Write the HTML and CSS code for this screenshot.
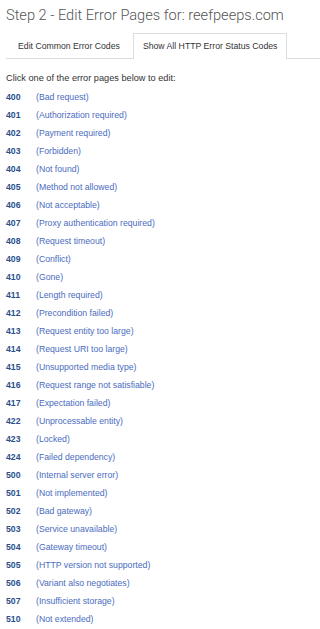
FILE: index.html
```html
<!DOCTYPE html>
<html>
<head>
<meta charset="utf-8">
<link rel="stylesheet" href="styles.css">
</head>
<body>
<h1 class="title">Step 2 - Edit Error Pages for: reefpeeps.com</h1>
<div class="tabs">
  <div class="tab">Edit Common Error Codes</div>
  <div class="tab active">Show All HTTP Error Status Codes</div>
</div>
<p class="intro">Click one of the error pages below to edit:</p>
<ul class="codes">
  <li><a class="code">400</a><a class="desc">(Bad request)</a></li>
  <li><a class="code">401</a><a class="desc">(Authorization required)</a></li>
  <li><a class="code">402</a><a class="desc">(Payment required)</a></li>
  <li><a class="code">403</a><a class="desc">(Forbidden)</a></li>
  <li><a class="code">404</a><a class="desc">(Not found)</a></li>
  <li><a class="code">405</a><a class="desc">(Method not allowed)</a></li>
  <li><a class="code">406</a><a class="desc">(Not acceptable)</a></li>
  <li><a class="code">407</a><a class="desc">(Proxy authentication required)</a></li>
  <li><a class="code">408</a><a class="desc">(Request timeout)</a></li>
  <li><a class="code">409</a><a class="desc">(Conflict)</a></li>
  <li><a class="code">410</a><a class="desc">(Gone)</a></li>
  <li><a class="code">411</a><a class="desc">(Length required)</a></li>
  <li><a class="code">412</a><a class="desc">(Precondition failed)</a></li>
  <li><a class="code">413</a><a class="desc">(Request entity too large)</a></li>
  <li><a class="code">414</a><a class="desc">(Request URI too large)</a></li>
  <li><a class="code">415</a><a class="desc">(Unsupported media type)</a></li>
  <li><a class="code">416</a><a class="desc">(Request range not satisfiable)</a></li>
  <li><a class="code">417</a><a class="desc">(Expectation failed)</a></li>
  <li><a class="code">422</a><a class="desc">(Unprocessable entity)</a></li>
  <li><a class="code">423</a><a class="desc">(Locked)</a></li>
  <li><a class="code">424</a><a class="desc">(Failed dependency)</a></li>
  <li><a class="code">500</a><a class="desc">(Internal server error)</a></li>
  <li><a class="code">501</a><a class="desc">(Not implemented)</a></li>
  <li><a class="code">502</a><a class="desc">(Bad gateway)</a></li>
  <li><a class="code">503</a><a class="desc">(Service unavailable)</a></li>
  <li><a class="code">504</a><a class="desc">(Gateway timeout)</a></li>
  <li><a class="code">505</a><a class="desc">(HTTP version not supported)</a></li>
  <li><a class="code">506</a><a class="desc">(Variant also negotiates)</a></li>
  <li><a class="code">507</a><a class="desc">(Insufficient storage)</a></li>
  <li><a class="code">510</a><a class="desc">(Not extended)</a></li>
</ul>
</body>
</html>
```
FILE: styles.css
```css
html, body {
  margin: 0;
  padding: 0;
  background: #fff;
}
body {
  font-family: "Liberation Sans", Arial, sans-serif;
  color: #333;
  padding: 0 0 0 6px;
}
.title {
  margin: 0;
  padding-top: 5px;
  font-family: Roboto, "Liberation Sans", sans-serif;
  font-size: 14.6px;
  font-weight: 300;
  line-height: 20px;
  color: #555;
  white-space: nowrap;
}
.tabs {
  display: flex;
  margin-top: 8px;
  border-bottom: 1px solid #ddd;
  height: 25px;
}
.tab {
  font-size: 8.7px;
  color: #333;
  padding: 0 10px 0 11px;
  line-height: 25px;
  border: 1px solid transparent;
  border-bottom: none;
  margin-right: 2px;
  white-space: nowrap;
}
.tab.active {
  border-color: #ddd;
  background: #fff;
  height: 25px;
  padding: 0 9px;
  margin-bottom: -1px;
}
.intro {
  margin: 12px 0 0;
  font-size: 9.2px;
  line-height: 14px;
  color: #333;
}
.codes {
  list-style: none;
  margin: 3px 0 0;
  padding: 0;
}
.codes li {
  display: flex;
  font-size: 8.7px;
  line-height: 18px;
  height: 18px;
}
.code {
  width: 30px;
  font-weight: bold;
  color: #2c4f8c;
}
.desc {
  color: #4a6cc0;
}
```
